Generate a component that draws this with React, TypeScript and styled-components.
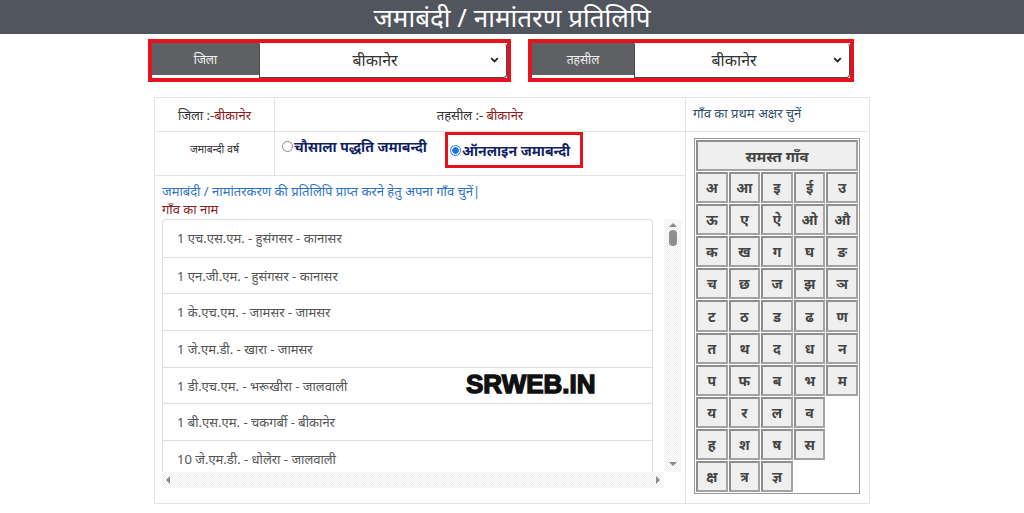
import * as React from 'react'
import styled, { createGlobalStyle } from 'styled-components'

const GlobalStyle = createGlobalStyle`
    html, body {
        margin: 0;
        padding: 0;
        background: #fff;
    }
    body {
        font-family: "Noto Sans", "Liberation Sans", sans-serif;
        color: #333;
    }
    * {
        box-sizing: border-box;
    }
`

const districts = { zila: 'बीकानेर', tehsil: 'बीकानेर' }

const villages = [
    '1 एच.एस.एम. - हुसंगसर - कानासर',
    '1 एन.जी.एम. - हुसंगसर - कानासर',
    '1 के.एच.एम. - जामसर - जामसर',
    '1 जे.एम.डी. - खारा - जामसर',
    '1 डी.एच.एम. - भरूखीरा - जालवाली',
    '1 बी.एस.एम. - चकगर्बी - बीकानेर',
    '10 जे.एम.डी. - धोलेरा - जालवाली',
]

const letters = [
    'अ', 'आ', 'इ', 'ई', 'उ',
    'ऊ', 'ए', 'ऐ', 'ओ', 'औ',
    'क', 'ख', 'ग', 'घ', 'ङ',
    'च', 'छ', 'ज', 'झ', 'ञ',
    'ट', 'ठ', 'ड', 'ढ', 'ण',
    'त', 'थ', 'द', 'ध', 'न',
    'प', 'फ', 'ब', 'भ', 'म',
    'य', 'र', 'ल', 'व', '',
    'ह', 'श', 'ष', 'स', '',
    'क्ष', 'त्र', 'ज्ञ',
]

const Chevron = () => (
    <svg width="9" height="6" viewBox="0 0 9 6">
        <polyline points="1.2,1.2 4.5,4.4 7.8,1.2" fill="none" stroke="#222" strokeWidth="1.8" />
    </svg>
)

const Dropdown = ({ label, value, labelWidth, selectWidth }: { label: string, value: string, labelWidth: number, selectWidth: number }) => (
    <RedBox>
        <SelectLabel width={labelWidth}>{label}</SelectLabel>
        <FakeSelect width={selectWidth}>
            <SelectValue>{value}</SelectValue>
            <Chevron />
        </FakeSelect>
    </RedBox>
)

const Radio = ({ checked, children }: { checked?: boolean, children: React.ReactNode }) => (
    <RadioLabel>
        <RadioDot checked={checked} />
        {children}
    </RadioLabel>
)

export default () => (
    <>
        <GlobalStyle />
        <Header>जमाबंदी / नामांतरण प्रतिलिपि</Header>
        <DropdownRow>
            <Dropdown label="जिला" value={districts.zila} labelWidth={107} selectWidth={248} />
            <Dropdown label="तहसील" value={districts.tehsil} labelWidth={102} selectWidth={216} />
        </DropdownRow>
        <Panel>
            <Cell right bottom>
                जिला :-<Place>{districts.zila}</Place>
            </Cell>
            <Cell right bottom>
                {'तहसील :- '}<Place>{districts.tehsil}</Place>
            </Cell>
            <HintCell>गाँव का प्रथम अक्षर चुनें</HintCell>
            <Cell right bottom small>जमाबन्दी वर्ष</Cell>
            <RadioCell>
                <Radio>चौसाला पद्धति जमाबन्दी</Radio>
                <Highlight>
                    <Radio checked>ऑनलाइन जमाबन्दी</Radio>
                </Highlight>
            </RadioCell>
            <LetterCell>
                <LetterTable>
                    <AllVillages>समस्त गाँव</AllVillages>
                    {letters.map((letter, index) =>
                        letter
                            ? <Letter key={index}>{letter}</Letter>
                            : <Blank key={index} />
                    )}
                </LetterTable>
            </LetterCell>
            <VillageCell>
                <Instruction>जमाबंदी / नामांतरकरण की प्रतिलिपि प्राप्त करने हेतु अपना गाँव चुनें|</Instruction>
                <FieldName>गाँव का नाम</FieldName>
                <ScrollFrame>
                    <Viewport>
                        <VillageList>
                            {villages.map((village, index) =>
                                <VillageItem key={index}>{village}</VillageItem>
                            )}
                        </VillageList>
                    </Viewport>
                    <VTrack>
                        <ArrowUp />
                        <VThumb />
                        <ArrowDown />
                    </VTrack>
                    <HTrack>
                        <ArrowLeft />
                        <ArrowRight />
                    </HTrack>
                </ScrollFrame>
            </VillageCell>
            <Watermark>SRWEB.IN</Watermark>
        </Panel>
    </>
)

const Header = styled.h1`
    margin: 0;
    height: 34px;
    background: #51565e;
    color: #fff;
    font-family: "Noto Sans", sans-serif;
    font-weight: 400;
    font-size: 26px;
    line-height: 34px;
    text-align: center;
`

const DropdownRow = styled.div`
    display: flex;
    gap: 17px;
    padding: 5px 0 0 148px;
`

const RedBox = styled.div`
    display: flex;
    align-items: flex-start;
    border: 4px solid #e5141c;
    height: 43px;
`

const SelectLabel = styled.div<{ width: number }>`
    width: ${p => p.width}px;
    height: 32px;
    background: #5f6064;
    color: #f2f2f2;
    font-size: 12px;
    display: flex;
    align-items: center;
    justify-content: center;
`

const FakeSelect = styled.div<{ width: number }>`
    width: ${p => p.width}px;
    height: 35px;
    background: #fff;
    border: 1px solid #4a4a4a;
    border-top-color: #f4f4f4;
    border-radius: 0 4px 4px 0;
    display: flex;
    align-items: center;
    padding: 0 7px 2px 0;
`

const SelectValue = styled.span`
    flex: 1;
    text-align: center;
    font-size: 16px;
    color: #333;
`

const Panel = styled.div`
    position: relative;
    margin: 15px 0 0 154px;
    width: 716px;
    height: 407px;
    border: 1px solid #e3e3e3;
    display: grid;
    grid-template-columns: 120px 411px 1fr;
    grid-template-rows: 34px 44px 1fr;
`

const Cell = styled.div<{ right?: boolean, bottom?: boolean, small?: boolean }>`
    display: flex;
    align-items: ${p => p.small ? 'flex-start' : 'center'};
    justify-content: center;
    padding-top: ${p => p.small ? '10px' : '0'};
    font-size: ${p => p.small ? '10.5px' : '13px'};
    color: #333;
    border-right: ${p => p.right ? '1px solid #e3e3e3' : 'none'};
    border-bottom: ${p => p.bottom ? '1px solid #e3e3e3' : 'none'};
    white-space: pre;
`

const Place = styled.span`
    color: #8d1b1b;
`

const HintCell = styled.div`
    display: flex;
    align-items: center;
    padding: 0 0 3px 7px;
    font-size: 13px;
    color: #34506e;
    border-bottom: 1px solid #e3e3e3;
`

const RadioCell = styled.div`
    display: flex;
    align-items: flex-start;
    gap: 18px;
    padding: 0 0 0 7px;
    border-right: 1px solid #e3e3e3;
    border-bottom: 1px solid #e3e3e3;
`

const Highlight = styled.div`
    border: 3px solid #e5141c;
    padding: 1px 10px 2px 2px;
`

const RadioLabel = styled.label`
    display: flex;
    align-items: center;
    height: 26px;
    margin-top: 1px;
    font-size: 14px;
    font-weight: 700;
    color: #101f63;
`

const RadioDot = styled.span<{ checked?: boolean }>`
    width: 11px;
    height: 11px;
    border-radius: 50%;
    margin-right: 1px;
    border: 1px solid ${p => p.checked ? '#1a73e8' : '#8a8a8a'};
    background: ${p => p.checked ? 'radial-gradient(circle, #1a73e8 0 3px, #fff 3.5px)' : '#fff'};
`

const LetterCell = styled.div`
    grid-row: 2 / 4;
    grid-column: 3;
    padding: 6px 8px 0 8px;
`

const LetterTable = styled.div`
    width: 166px;
    border: 1px solid #9a9a9a;
    padding: 1px;
    display: grid;
    grid-template-columns: repeat(5, 1fr);
    grid-auto-rows: 31.1px;
    gap: 1px;
`

const Letter = styled.div`
    display: flex;
    align-items: center;
    justify-content: center;
    background: #efefef;
    border: 2px solid #8e8e8e;
    border-right-color: #a3a3a3;
    border-bottom-color: #a3a3a3;
    font-size: 14px;
    font-weight: 700;
    color: #444;
`

const AllVillages = styled(Letter)`
    grid-column: 1 / 6;
    font-size: 15px;
`

const Blank = styled.div``

const VillageCell = styled.div`
    grid-row: 3;
    grid-column: 1 / 3;
    border-right: 1px solid #e3e3e3;
    padding: 6px 4px 0 7px;
    display: flex;
    flex-direction: column;
`

const Instruction = styled.div`
    font-size: 13px;
    line-height: 18px;
    color: #2f72c6;
`

const FieldName = styled.div`
    font-size: 13px;
    line-height: 18px;
    color: #8d1b1b;
`

const ScrollFrame = styled.div`
    margin-top: 1px;
    width: 520px;
    height: 269px;
    display: grid;
    grid-template-columns: 1fr 18px;
    grid-template-rows: 1fr 16px;
`

const Viewport = styled.div`
    overflow: hidden;
`

const VillageList = styled.ul`
    list-style: none;
    margin: 0;
    padding: 0;
    width: 491px;
    border: 1px solid #dddddd;
    border-bottom: none;
    border-radius: 4px 4px 0 0;
`

const VillageItem = styled.li`
    height: 36.7px;
    display: flex;
    align-items: center;
    padding-left: 14px;
    font-size: 13px;
    color: #555;
    border-top: 1px solid #dddddd;

    &:first-child {
        border-top: none;
    }
`

const dotted = `repeating-conic-gradient(#eeeeee 0 25%, #ffffff 0 50%) 0 0 / 2px 2px`

const VTrack = styled.div`
    background: ${dotted};
    display: flex;
    flex-direction: column;
    align-items: center;
    padding-top: 4px;
`

const VThumb = styled.div`
    width: 8px;
    height: 16px;
    margin-top: 3px;
    border-radius: 4px;
    background: #8f8f8f;
`

const ArrowUp = styled.div`
    width: 0;
    height: 0;
    border-left: 4px solid transparent;
    border-right: 4px solid transparent;
    border-bottom: 4px solid #8a8a8a;
`

const ArrowDown = styled(ArrowUp)`
    border-bottom: none;
    border-top: 4px solid #8a8a8a;
    margin-top: auto;
    margin-bottom: 6px;
`

const HTrack = styled.div`
    background: ${dotted};
    display: flex;
    align-items: center;
    justify-content: space-between;
    padding: 0 4px;
`

const ArrowLeft = styled.div`
    width: 0;
    height: 0;
    border-top: 4px solid transparent;
    border-bottom: 4px solid transparent;
    border-right: 4px solid #8a8a8a;
`

const ArrowRight = styled(ArrowLeft)`
    border-right: none;
    border-left: 4px solid #8a8a8a;
`

const Watermark = styled.div`
    position: absolute;
    left: 311px;
    top: 273px;
    font-family: "Liberation Sans", sans-serif;
    font-size: 26px;
    line-height: 1;
    font-weight: 900;
    color: #111;
    -webkit-text-stroke: 1.4px #111;
    letter-spacing: 0px;
`
